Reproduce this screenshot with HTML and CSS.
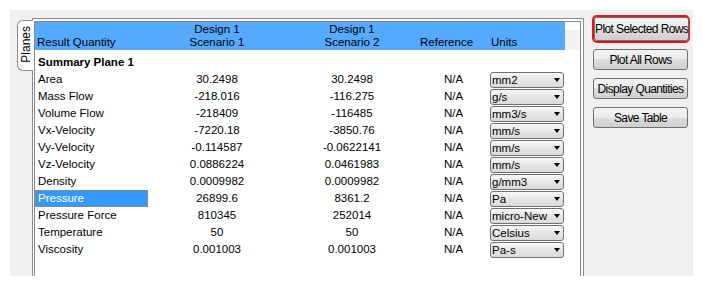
FILE: index.html
```html
<!DOCTYPE html>
<html lang="en">
<head>
    <meta charset="UTF-8">
    <title>Planes</title>
<link rel="stylesheet" href="styles.css">
</head>
<body>
<div class="window">
    <div class="tabwidget">
        <div class="tab"><span>Planes</span></div>
        <div class="pane">
            <div class="grid">
                <div class="head-wrap">
                    <div class="head">
                        <div class="h left">Result Quantity</div>
                        <div class="h">Design 1<br>Scenario 1</div>
                        <div class="h">Design 1<br>Scenario 2</div>
                        <div class="h left">Reference</div>
                        <div class="h left">Units</div>
                    </div>
                    <div class="head-fill"></div>
                </div>

                <div class="body">
                    <div class="row group"><div class="c name">Summary Plane 1</div></div>
                    <div class="row"><div class="c name">Area</div><div class="c">30.2498</div><div class="c">30.2498</div><div class="c">N/A</div><div class="combo"><span>mm2</span></div></div>
                    <div class="row"><div class="c name">Mass Flow</div><div class="c">-218.016</div><div class="c">-116.275</div><div class="c">N/A</div><div class="combo"><span>g/s</span></div></div>
                    <div class="row"><div class="c name">Volume Flow</div><div class="c">-218409</div><div class="c">-116485</div><div class="c">N/A</div><div class="combo"><span>mm3/s</span></div></div>
                    <div class="row"><div class="c name">Vx-Velocity</div><div class="c">-7220.18</div><div class="c">-3850.76</div><div class="c">N/A</div><div class="combo"><span>mm/s</span></div></div>
                    <div class="row"><div class="c name">Vy-Velocity</div><div class="c">-0.114587</div><div class="c">-0.0622141</div><div class="c">N/A</div><div class="combo"><span>mm/s</span></div></div>
                    <div class="row"><div class="c name">Vz-Velocity</div><div class="c">0.0886224</div><div class="c">0.0461983</div><div class="c">N/A</div><div class="combo"><span>mm/s</span></div></div>
                    <div class="row"><div class="c name">Density</div><div class="c">0.0009982</div><div class="c">0.0009982</div><div class="c">N/A</div><div class="combo"><span>g/mm3</span></div></div>
                    <div class="row"><div class="c name sel">Pressure</div><div class="c">26899.6</div><div class="c">8361.2</div><div class="c">N/A</div><div class="combo"><span>Pa</span></div></div>
                    <div class="row"><div class="c name">Pressure Force</div><div class="c">810345</div><div class="c">252014</div><div class="c">N/A</div><div class="combo"><span>micro-New</span></div></div>
                    <div class="row"><div class="c name">Temperature</div><div class="c">50</div><div class="c">50</div><div class="c">N/A</div><div class="combo"><span>Celsius</span></div></div>
                    <div class="row"><div class="c name">Viscosity</div><div class="c">0.001003</div><div class="c">0.001003</div><div class="c">N/A</div><div class="combo"><span>Pa-s</span></div></div>
                </div>
            </div>
        </div>
    </div>

    <div class="buttons">
        <div class="focus"><button class="btn">Plot Selected Rows</button></div>
        <button class="btn">Plot All Rows</button>
        <button class="btn">Display Quantities</button>
        <button class="btn">Save Table</button>
    </div>
</div>
</body>
</html>
```

FILE: styles.css
```css
* {
    box-sizing: border-box;
}

body {
    margin: 0;
    background: #fff;
    font-family: "Liberation Sans", Arial, sans-serif;
    font-size: 11.5px;
    color: #000;
}

.window {
    margin: 10px;
    height: 266px;
    background: #f0f0f0;
    display: flex;
    padding: 5px 0 0 7px;
    overflow: hidden;
}

/* tab widget with the tab on the west side */
.tabwidget {
    display: flex;
    align-items: flex-start;
    margin-top: 3px;
    width: 567px;
}

.tab {
    position: relative;
    z-index: 1;
    width: 16px;
    height: 51px;
    margin-top: 2px;
    margin-right: -1px;
    background: #fff;
    border: 1px solid #898c95;
    border-right: none;
    border-radius: 6px 0 0 6px;
    display: flex;
    align-items: center;
    justify-content: center;
}

.tab span {
    writing-mode: vertical-rl;
    transform: rotate(180deg);
    font-size: 12px;
    line-height: 12px;
    padding-top: 3px;
}

.pane {
    flex: 1;
    align-self: stretch;
    display: flex;
    background: #fff;
    border: 1px solid #898c95;
    border-bottom: none;
    padding: 2px 2px 0 1px;
}

.grid {
    flex: 1;
    background: #fff;
    border: 1px solid #828790;
    border-bottom: none;
}

.head-wrap {
    display: flex;
    height: 28px;
}

.head, .row {
    display: grid;
    grid-template-columns: 113px 138px 132px 71px 76px;
}

.head {
    background: #55aaff;
}

.h {
    display: flex;
    align-items: flex-end;
    justify-content: center;
    text-align: center;
    line-height: 13px;
    padding-bottom: 1px;
}

.h.left {
    justify-content: flex-start;
    text-align: left;
    padding-left: 2px;
}

.head-fill {
    flex: 1;
    background: linear-gradient(#fff 30%, #f2f2f2 30%);
}

.body {
    padding-top: 4px;
}

.row {
    height: 17px;
    line-height: 17px;
}

.c {
    text-align: center;
    white-space: nowrap;
}

.c.name {
    text-align: left;
    padding-left: 3px;
}

.group .name {
    grid-column: 1 / 4;
    font-weight: bold;
}

.c.sel {
    background: #3399ff;
    color: #fff;
    border: 1px dotted #d47a2c;
    padding-left: 2px;
    line-height: 15px;
}

.combo {
    margin: 1px 0 0 1px;
    width: 74px;
    height: 16px;
    display: flex;
    align-items: center;
    line-height: 14px;
    padding-left: 1px;
    border: 1px solid #707070;
    border-radius: 3px;
    background: linear-gradient(#f7f7f7, #e6e6e6 50%, #dadada);
}

.combo span {
    flex: 1;
    overflow: hidden;
    white-space: nowrap;
}

.combo::after {
    content: "";
    border-left: 3.5px solid transparent;
    border-right: 3.5px solid transparent;
    border-top: 4px solid #000;
    margin: 0 3px 0 2px;
}

/* buttons on the right */
.buttons {
    margin-left: 8px;
    width: 98px;
    display: flex;
    flex-direction: column;
}

.focus {
    height: 28px;
    display: flex;
    border: 2px solid #e5141c;
    border-radius: 5px;
}

.btn {
    width: 95px;
    height: 21px;
    margin: 0 0 0 1px;
    padding: 0;
    display: flex;
    align-items: center;
    justify-content: center;
    white-space: nowrap;
    font-family: "Liberation Sans", Arial, sans-serif;
    font-size: 12px;
    letter-spacing: -0.6px;
    color: #000;
    border: 1px solid #707070;
    border-radius: 3px;
    background: linear-gradient(#f2f2f2, #ebebeb 50%, #dddddd 50%, #cfcfcf);
}

.focus .btn {
    flex: 1;
    width: auto;
    height: auto;
    margin: 0;
}

.focus + .btn {
    margin-top: 6px;
}

.btn + .btn {
    margin-top: 8px;
}
```
